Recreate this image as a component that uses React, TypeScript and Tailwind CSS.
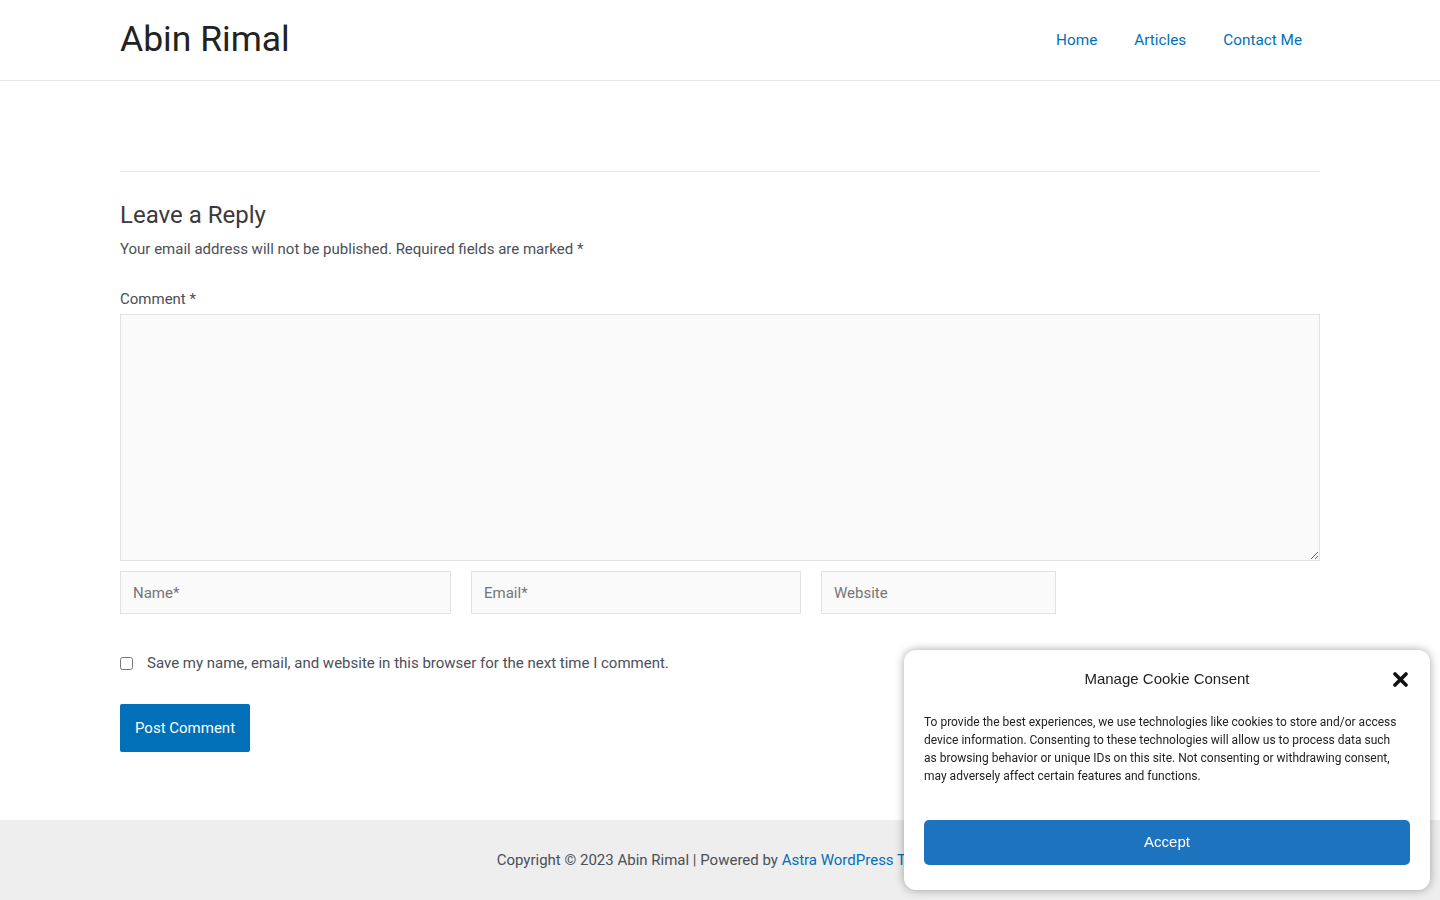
import React from 'react'

// Astra-style blog footer area: comment form, site footer and a cookie consent popup.
const roboto = { fontFamily: 'Roboto, "Liberation Sans", Arial, sans-serif' }

function Header() {
  return (
    <header className="h-[81px] border-b border-[#e6e6e6] bg-white">
      <div className="mx-auto flex h-[80px] w-[1200px] items-center justify-between">
        <a className="text-[35.5px] leading-none text-[#222222]">Abin Rimal</a>
        <nav className="flex items-center text-[15.3px] text-[#0170b9]">
          <a className="px-[18.5px]">Home</a>
          <a className="px-[18.5px]">Articles</a>
          <a className="pl-[18.5px] pr-[18px]">Contact Me</a>
        </nav>
      </div>
    </header>
  )
}

function CommentForm() {
  const field =
    'h-[43px] border border-[#e2e2e2] bg-[#fafafa] px-3 text-[15px] text-[#4b4f58] placeholder:text-[#757575] outline-none'
  return (
    <main className="bg-white">
      <div className="mx-auto w-[1200px] pt-[90px] pb-[68px]">
        <div className="border-t border-[#e9e9e9]" />
        <h3 className="mt-[28px] text-[24px] leading-[31px] text-[#3a3a3a]">Leave a Reply</h3>
        <p className="mt-[6px] text-[15px] leading-[24px] text-[#4b4f58]">
          Your email address will not be published. Required fields are marked *
        </p>
        <label className="mt-[26px] block text-[15px] leading-[24px] text-[#4b4f58]">Comment *</label>
        <textarea className="mt-[3px] block h-[247px] w-full resize-y border border-[#e2e2e2] bg-[#fafafa] outline-none" />
        <div className="mt-[10px] flex gap-5">
          <input className={`${field} w-[331px]`} placeholder="Name*" />
          <input className={`${field} w-[330px]`} placeholder="Email*" />
          <input className={`${field} w-[235px]`} placeholder="Website" />
        </div>
        <div className="mt-[37px] flex items-center text-[15px] leading-[24px] text-[#4b4f58]">
          <input type="checkbox" className="m-0 h-[13px] w-[13px]" />
          <span className="ml-[14px]">Save my name, email, and website in this browser for the next time I comment.</span>
        </div>
        <button className="mt-[29px] h-[48px] rounded-[2px] bg-[#0170b9] px-[15px] text-[15px] text-white">
          Post Comment
        </button>
      </div>
    </main>
  )
}

function Footer() {
  return (
    <footer className="flex h-[80px] items-center justify-center bg-[#eeeeee] text-[15px] text-[#4b4f58]">
      <span>
        Copyright © 2023 Abin Rimal | Powered by <a className="text-[#0170b9]">Astra WordPress Theme</a>
      </span>
    </footer>
  )
}

// Floating consent box, bottom right
function CookieBanner() {
  return (
    <div className="fixed left-[904px] top-[650px] w-[526px] rounded-[12px] bg-white px-5 pt-[20px] pb-[25px] shadow-[0_0_10px_rgba(0,0,0,0.35)]">
      <div className="relative flex h-[18px] items-center justify-center">
        <span className="text-[15px] text-[#222222]" style={{ fontFamily: '"Liberation Sans", Arial, sans-serif' }}>
          Manage Cookie Consent
        </span>
        <svg className="absolute right-[2px] top-[2px]" width="15" height="15" viewBox="0 0 15 15">
          <path d="M2 2 L13 13 M13 2 L2 13" stroke="#111111" strokeWidth="3.6" strokeLinecap="round" />
        </svg>
      </div>
      <p className="mt-[25px] mr-[10px] text-[12px] leading-[18px] text-[#222222]">
        To provide the best experiences, we use technologies like cookies to store and/or access device information.
        Consenting to these technologies will allow us to process data such as browsing behavior or unique IDs on this
        site. Not consenting or withdrawing consent, may adversely affect certain features and functions.
      </p>
      <button
        className="mt-[35px] h-[45px] w-full rounded-[5px] bg-[#1e73be] text-[15px] text-white"
        style={{ fontFamily: '"Liberation Sans", Arial, sans-serif' }}
      >
        Accept
      </button>
    </div>
  )
}

export default function App() {
  return (
    <div className="min-h-screen bg-white" style={roboto}>
      <Header />
      <CommentForm />
      <Footer />
      <CookieBanner />
    </div>
  )
}
